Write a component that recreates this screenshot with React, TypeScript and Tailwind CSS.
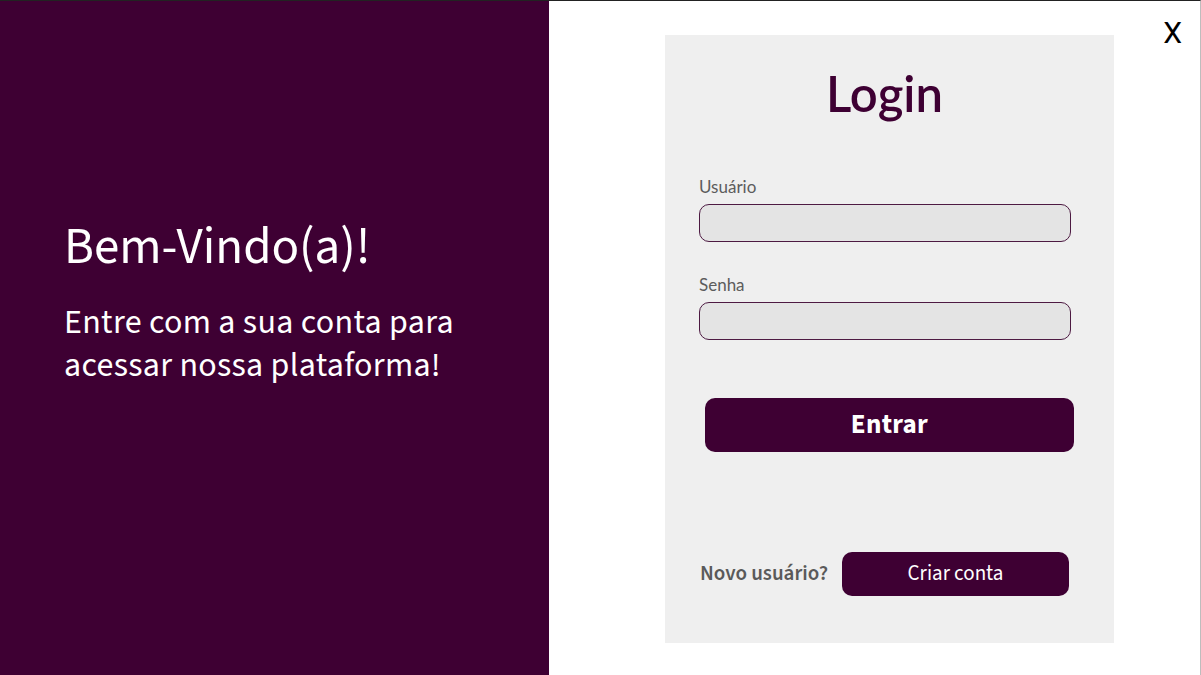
import { FC } from "react";

const App: FC = () => {
  return (
    <div className="flex h-[675px] w-[1201px] overflow-hidden border-t border-r border-t-[#222] border-r-[#bdbdbd] bg-white">
      <div className="flex w-[549px] shrink-0 flex-col justify-center bg-[#3e0033] pb-[72px] pl-[64px] font-['Source_Sans_3','Lato',sans-serif] text-white">
        <h1 className="text-[51px] leading-[60px]">Bem-Vindo(a)!</h1>
        <p className="mt-[24px] text-[34px] leading-[43px] tracking-[0.3px]">
          Entre com a sua conta para
          <br />
          acessar nossa plataforma!
        </p>
      </div>

      <div className="relative flex-1">
        <button className="absolute right-[18px] top-[14px] font-['Roboto',sans-serif] text-[30px] leading-[36px] text-black">
          X
        </button>

        <div className="ml-[116px] mt-[34px] flex h-[608px] w-[449px] flex-col bg-[#efefef] px-[34px] font-['Lato',sans-serif]">
          <h2 className="mt-[28px] pr-[10px] text-center text-[49px] font-semibold leading-[60px] text-[#3e0033]">
            Login
          </h2>

          <label className="mt-[53px] text-[17px] leading-[22px] text-[#5c5c5c]">Usuário</label>
          <input className="mt-[6px] h-[38px] w-[372px] rounded-[10px] border border-[#4d1a42] bg-[#e4e4e4] outline-none" />

          <label className="mt-[32px] text-[17px] leading-[22px] text-[#5c5c5c]">Senha</label>
          <input className="mt-[6px] h-[38px] w-[372px] rounded-[10px] border border-[#4d1a42] bg-[#e4e4e4] outline-none" />

          <button className="ml-[6px] mt-[58px] h-[54px] w-[369px] rounded-[10px] bg-[#3e0033] font-['Source_Sans_3','Lato',sans-serif] text-[27px] font-bold tracking-[0.3px] text-white">
            Entrar
          </button>

          <div className="mt-[100px] flex items-center font-['Source_Sans_3','Lato',sans-serif]">
            <span className="ml-[1px] w-[142px] text-[21px] font-semibold text-[#5a5a5a]">Novo usuário?</span>
            <button className="h-[44px] w-[227px] rounded-[10px] bg-[#3e0033] text-[21px] text-white">
              Criar conta
            </button>
          </div>
        </div>
      </div>
    </div>
  );
};

export default App;
